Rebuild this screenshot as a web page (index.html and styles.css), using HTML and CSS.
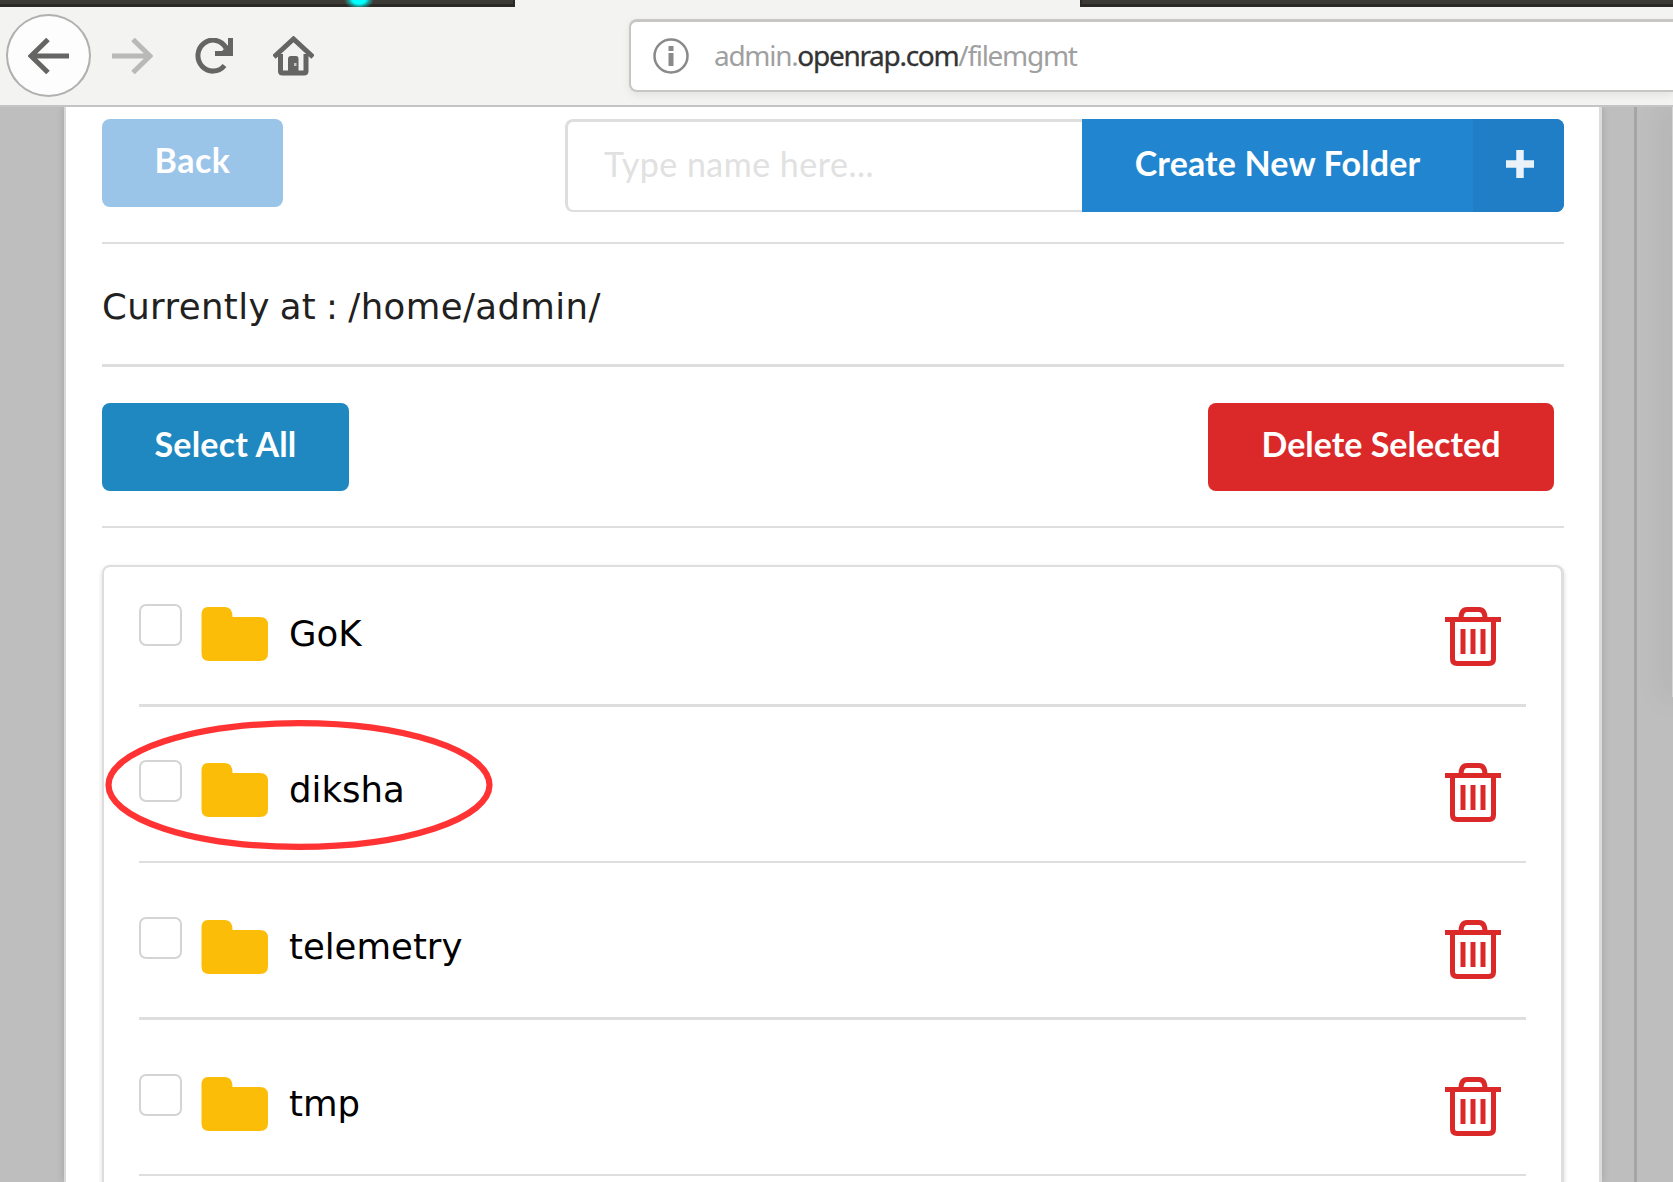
FILE: index.html
```
<!DOCTYPE html>
<html lang="en">
<head>
<meta charset="utf-8">
<title>File management</title>
<link rel="stylesheet" href="styles.css">
</head>
<body>
<svg class="defs" width="0" height="0">
  <symbol id="folder" viewBox="0 0 68 54"><path fill="#fbbd08" d="M1.500 8Q1.500 0 8 0H25Q32.500 0 32.500 10H60Q68 10 68 18V46Q68 54 60 54H9Q1.500 54 1.500 46Z"/></symbol>
  <symbol id="trash" viewBox="0 0 57 59"><g fill="none" stroke="#db2828" stroke-width="5"><path d="M0 12.500H56M7.500 12V52Q7.500 56.500 12 56.500H44Q48.500 56.500 48.500 52V12M16 12Q16 2.500 22 2.500H34Q40 2.500 40 12"/><path d="M18 22V47M28 22V47M38 22V47"/></g></symbol>
</svg>
<header class="browser">
  <div class="tabstrip"><div class="tabs-left"><i class="glow"></i></div><div class="tabs-right"></div></div>
  <div class="toolbar">
    <div class="nav-back"><svg width="42" height="36" viewBox="0 0 42 36"><path d="M41 18H4M20 1.500L3 18L20 34.500" fill="none" stroke="#656564" stroke-width="5"/></svg></div>
    <svg class="nav-forward" width="41" height="36" viewBox="0 0 41 36"><path d="M0 18H37M21 1.500L38 18L21 34.500" fill="none" stroke="#b9b9b8" stroke-width="5"/></svg>
    <svg class="nav-reload" width="39" height="36" viewBox="0 0 39 36"><path d="M29.500 27.500A15 15.500 0 1 1 31 10" fill="none" stroke="#656564" stroke-width="5"/><path d="M33 0H38V18H20V13H27L33 7Z" fill="#656564"/></svg>
    <svg class="nav-home" width="41" height="40" viewBox="0 0 41 40"><path d="M7.500 18V35Q7.500 37 9.500 37H31Q33 37 33 35V18M1 21L20.500 3L40 21" fill="none" stroke="#656564" stroke-width="5"/><path d="M15 38V23Q15 20 18 20H23Q25.500 20 25.500 23V38Z" fill="#656564"/><path d="M21 27H23.500V30H21Z" fill="#c5c5c4"/></svg>
    <div class="urlbar">
      <svg width="36" height="36" viewBox="0 0 36 36"><circle cx="18" cy="18" r="16.500" fill="none" stroke="#8a8a8a" stroke-width="2.500"/><path d="M15.500 8H20.500V13H15.500ZM15.500 15H20.500V28H15.500Z" fill="#8a8a8a"/></svg>
      <div class="url">admin.<span class="domain">openrap.com</span>/filemgmt</div>
    </div>
  </div>
</header>
<div class="backdrop">
  <main class="panel">
    <div class="top-row">
      <button class="btn back">Back</button>
      <div class="create">
        <input class="name" type="text" placeholder="Type name here...">
        <button class="create-btn"><span class="create-label">Create New Folder</span><span class="plus"><svg width="28" height="28" viewBox="0 0 28 28"><path d="M0 14H28M14 0V28" stroke="#e9f2f9" stroke-width="7.500"/></svg></span></button>
      </div>
    </div>
    <div class="location">Currently at : /home/admin/</div>
    <div class="actions">
      <button class="btn select">Select All</button>
      <button class="btn delete">Delete Selected</button>
    </div>
    <ul class="files">
      <li class="file"><i class="check"></i><svg class="folder"><use href="#folder"/></svg><span class="label">GoK</span><svg class="trash"><use href="#trash"/></svg></li>
      <li class="file thin"><i class="check"></i><svg class="folder"><use href="#folder"/></svg><span class="label">diksha</span><svg class="trash"><use href="#trash"/></svg></li>
      <li class="file"><i class="check"></i><svg class="folder"><use href="#folder"/></svg><span class="label">telemetry</span><svg class="trash"><use href="#trash"/></svg></li>
      <li class="file thin"><i class="check"></i><svg class="folder"><use href="#folder"/></svg><span class="label">tmp</span><svg class="trash"><use href="#trash"/></svg></li>
    </ul>
  </main>
  <div class="gutter"></div>
  <div class="side"><div class="side-shadow"></div></div>
</div>
<svg class="marker" width="388" height="130" viewBox="0 0 388 130"><ellipse cx="194" cy="65" rx="190.500" ry="61.800" fill="none" stroke="#f33" stroke-width="6.200"/></svg>
</body>
</html>
```
FILE: styles.css
```
* { box-sizing: border-box; }
html, body { margin: 0; height: 1182px; overflow: hidden; }
body { position: relative; width: 1673px; display: flex; flex-direction: column; background: #bebebe; font-family: "DejaVu Sans", sans-serif; }
svg { display: block; flex: none; }
button, input { font-family: Lato, sans-serif; margin: 0; padding: 0; border: 0; }
.defs { position: absolute; }

.browser { flex: none; height: 107px; background: #f3f3f1; border-bottom: 2px solid #c4c4c4; display: flex; flex-direction: column; }
.tabstrip { height: 7px; display: flex; justify-content: space-between; }
.tabs-left, .tabs-right { height: 7px; background: #3c3a35; border-bottom: 3px solid #2b2925; }
.tabs-left { position: relative; width: 515px; border-right: 2px solid #2b2925; }
.tabs-right { width: 593px; border-left: 2px solid #2b2925; }
.glow { position: absolute; left: 344px; top: -12px; width: 30px; height: 22px; background: radial-gradient(ellipse closest-side, #00ffff 45%, rgba(0,255,255,.45) 70%, rgba(0,255,255,0)); clip-path: inset(0 0 3px 0); }
.toolbar { height: 97px; display: flex; align-items: center; padding-left: 6px; }
.nav-back { width: 85px; height: 83px; border: 2px solid #b0b0af; border-radius: 50%; background: #fdfdfd; display: flex; align-items: center; justify-content: center; }
.nav-forward { margin-left: 21px; }
.nav-reload { margin-left: 42px; }
.nav-home { margin-left: 39px; }
.urlbar { flex: 1; height: 73px; margin-left: 315px; display: flex; align-items: center; padding-left: 22px; background: #fff; border: 2px solid #c8c6c4; border-top-width: 3px; border-right: 0; border-radius: 8px 0 0 8px; box-shadow: 0 3px 8px rgba(0,0,0,.07); }
.url { margin-left: 25px; padding-bottom: 3px; font: 28px/36px "Noto Sans", sans-serif; letter-spacing: -1.300px; color: #a0a0a0; white-space: nowrap; }
.domain { color: #333; -webkit-text-stroke: .3px #333; }

.backdrop { flex: 1; display: flex; min-height: 0; overflow: hidden; }
.panel { width: 1538px; flex: none; margin-left: 64px; padding: 12px 35px 0 36px; background: #fff; border-left: 2px solid #d9d9d9; border-right: 3px solid #dcdcdc; box-shadow: 0 0 8px rgba(0,0,0,.15); }
.gutter { width: 32px; flex: none; }
.side { flex: 1; border-left: 3px solid #a5a5a5; overflow: hidden; display: flex; justify-content: flex-end; }
.side-shadow { width: 1px; height: 590px; background: #d4d4d4; box-shadow: 0 0 28px 1px rgba(0,0,0,.4); }

.top-row { height: 125px; display: flex; justify-content: space-between; border-bottom: 2px solid #dedede; }
.btn { height: 88px; border-radius: 8px; color: #fff; font-size: 34px; font-weight: 700; line-height: 40px; padding-bottom: 5px; white-space: nowrap; }
.back { width: 181px; background: #9ac5e9; padding-bottom: 6px; letter-spacing: .5px; }
.create { width: 999px; height: 93px; display: flex; }
.name { width: 517px; border: 2px solid #dedede; border-top-width: 3px; border-left-width: 3px; border-right: 0; border-radius: 8px 0 0 8px; padding: 0 0 6px 36px; font-size: 34px; letter-spacing: .5px; color: #333; background: #fff; }
.name::placeholder { color: #e1e1e1; opacity: 1; }
.create-btn { width: 482px; display: flex; border-radius: 0 8px 8px 0; overflow: hidden; background: #2185d0; color: #fff; font-size: 34px; letter-spacing: .15px; font-weight: 700; }
.create-label { width: 391px; line-height: 88px; white-space: nowrap; }
.plus { width: 91px; height: 93px; background: #1f7ec5; display: flex; align-items: center; justify-content: center; padding: 0 0 3px 2px; }
.location { height: 123px; display: flex; align-items: center; padding-top: 4px; border-bottom: 3px solid #dedede; font-size: 35.500px; letter-spacing: .4px; word-spacing: -1.800px; color: #212121; white-space: pre; }
.actions { height: 161px; display: flex; align-items: center; justify-content: space-between; padding-right: 10px; border-bottom: 2px solid #dedede; }
.select { width: 247px; background: #2088c0; letter-spacing: .2px; }
.delete { width: 346px; background: #db2828; }
.files { list-style: none; margin: 37px 0 0; height: 700px; padding: 0 35px; border: 2px solid #dedede; border-right-width: 3px; border-radius: 8px; box-shadow: 0 2px 5px rgba(0,0,0,.14); }
.file { height: 156px; display: flex; align-items: flex-start; padding-top: 54px; border-bottom: 3px solid #dedede; }
.file.thin { border-bottom-width: 2px; }
.file:first-child { height: 140px; padding-top: 37px; }
.file:nth-child(2) { padding-top: 53px; }
.file:nth-child(3) { height: 157px; }
.check { width: 43px; height: 42px; border: 2px solid #d4d4d5; border-radius: 7px; background: #fff; }
.folder { width: 68px; height: 54px; margin: 3px 0 0 18px; }
.label { flex: 1; margin-left: 21px; font-size: 35.500px; line-height: 54px; margin-top: 3px; color: #000; }
.trash { width: 57px; height: 59px; margin: 3px 24px 0 0; }
.marker { position: absolute; left: 105px; top: 720px; }
```
